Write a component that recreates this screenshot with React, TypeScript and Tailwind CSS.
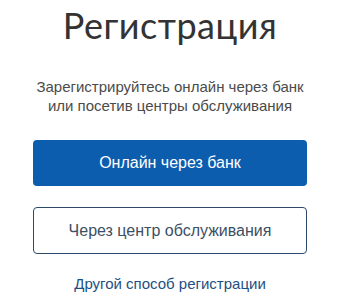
export default function App() {
  return (
    <div className="flex h-[299px] w-[340px] flex-col items-center bg-white font-['Lato','Liberation_Sans',sans-serif]">
      <h1 className="mt-[3px] text-[36px] leading-[44px] tracking-[0.5px] text-[#333333]">Регистрация</h1>
      <p className="mt-[30px] text-center font-['Liberation_Sans',sans-serif] text-[15px] leading-[19px] text-[#4b4b4b]">
        Зарегистрируйтесь онлайн через банк
        <br />
        или посетив центры обслуживания
      </p>
      <button className="mt-[25px] h-[46px] w-[274px] rounded-[4px] bg-[#0d5dae] font-['Liberation_Sans',sans-serif] text-[16px] text-white">
        Онлайн через банк
      </button>
      <button className="mt-[21px] h-[47px] w-[274px] rounded-[4px] border border-[#2e4a6b] bg-white font-['Liberation_Sans',sans-serif] text-[16px] text-[#3d4f63]">
        Через центр обслуживания
      </button>
      <a className="mt-[19px] font-['Liberation_Sans',sans-serif] text-[15px] text-[#1d4f82]">Другой способ регистрации</a>
    </div>
  );
}
